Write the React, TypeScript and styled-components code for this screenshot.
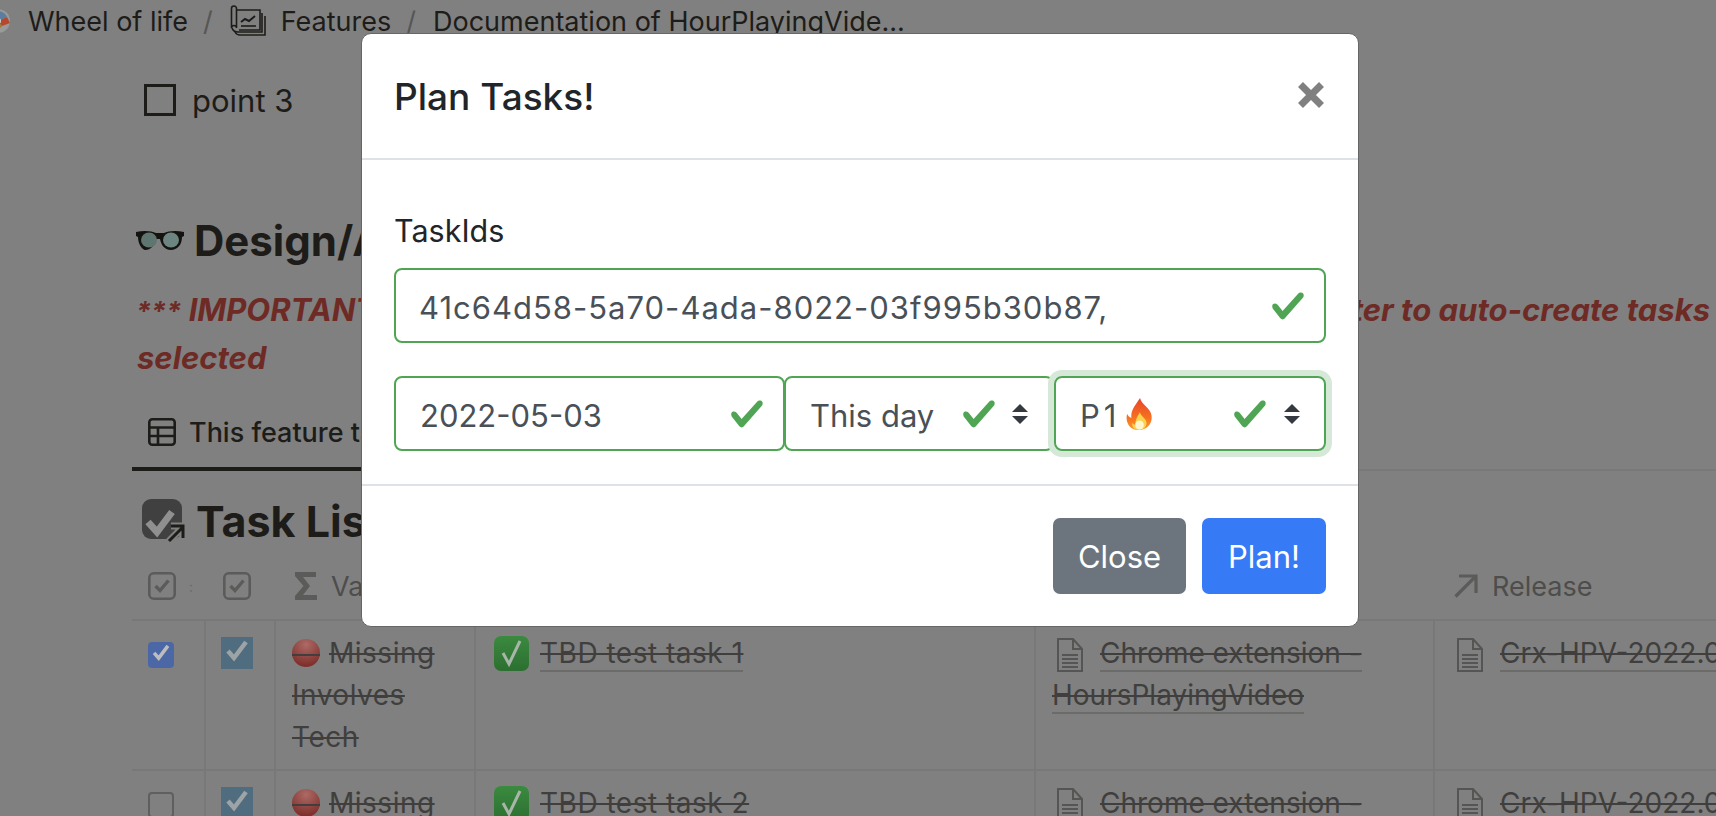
import React from 'react';
import styled, { createGlobalStyle } from 'styled-components';

const GlobalStyle = createGlobalStyle`
  html, body {
    margin: 0;
    padding: 0;
    height: 100%;
    overflow: hidden;
    background: #808080;
  }

  * {
    box-sizing: border-box;
  }
`;

const Page = styled.div`
  width: 1716px;
  height: 816px;
  overflow: hidden;
  background: #808080;
  color: #1d1c19;
  font-family: Inter, 'Liberation Sans', sans-serif;
`;

const Breadcrumbs = styled.nav`
  display: flex;
  align-items: center;
  height: 42px;
  margin-left: -14px;
  font-size: 27px;
  white-space: nowrap;
`;

const Crumb = styled.span<{ $gap: number }>`
  margin-left: ${(p) => p.$gap}px;
`;

const Slash = styled.span`
  margin: 0 17px 0 15px;
  color: #565654;
`;

const Content = styled.main`
  padding-left: 132px;
`;

const TodoRow = styled.div`
  display: flex;
  align-items: center;
  gap: 16px;
  height: 40px;
  margin-top: 38px;
  padding-left: 12px;
  font-size: 31px;
`;

const TodoBox = styled.span`
  width: 32px;
  height: 32px;
  border: 3px solid #1d1c19;
`;

const Heading = styled.h2`
  display: flex;
  align-items: center;
  gap: 10px;
  height: 60px;
  margin: 90px 0 0;
  padding-left: 4px;
  font-size: 42px;
  font-weight: 700;
  white-space: nowrap;
`;

const Note = styled.div<{ $flush?: boolean }>`
  display: flex;
  justify-content: space-between;
  margin-top: ${(p) => (p.$flush ? 0 : 16)}px;
  padding: 0 6px 0 5px;
  color: #6e2a25;
  font-size: 31px;
  font-style: italic;
  font-weight: 700;
  line-height: 48px;
  white-space: nowrap;
`;

const NoteStars = styled.span`
  margin-left: -1px;
  font-size: 27px;
  line-height: 1;
`;

const Tabs = styled.div`
  display: flex;
  margin-top: 28px;
  border-bottom: 2px solid #797979;
`;

const Tab = styled.div`
  display: flex;
  align-items: center;
  gap: 13px;
  width: 560px;
  height: 61px;
  margin-bottom: -2px;
  padding: 0 16px 13px;
  border-bottom: 4px solid #1d1c19;
  font-size: 27px;
  font-weight: 500;
  white-space: nowrap;
`;

const TaskHeading = styled(Heading)`
  margin: 21px 0 0;
  padding-left: 10px;
  gap: 10px;
  height: 58px;
  font-size: 43px;
`;

const COLUMNS = '74px 70px 200px 560px 399px 1fr';

const HeaderRow = styled.div`
  display: grid;
  grid-template-columns: ${COLUMNS};
  height: 71px;
  padding-top: 3px;
  border-bottom: 2px solid #787878;
  color: #4d4d4b;
  font-size: 27px;
`;

const HeaderCell = styled.div<{ $inset?: number }>`
  display: flex;
  align-items: center;
  gap: 14px;
  padding-left: ${(p) => p.$inset ?? 16}px;
  white-space: nowrap;
`;

const Grip = styled.span`
  margin-left: -1px;
  color: #6a6a6a;
  font-size: 14px;
`;

const Row = styled.div`
  display: grid;
  grid-template-columns: ${COLUMNS};
  height: 150px;
  border-bottom: 2px solid #787878;
`;

const Cell = styled.div<{ $inset?: number }>`
  padding: 11px 24px 0 ${(p) => p.$inset ?? 16}px;
  border-right: 2px solid #787878;
  color: #403f3d;
  font-size: 28px;
  line-height: 42px;

  &:last-child {
    padding-right: 0;
    border-right: 0;
    white-space: nowrap;
  }
`;

const Struck = styled.span`
  letter-spacing: 0.5px;
  text-decoration: line-through;
`;

const LinkText = styled.span<{ $spaced?: boolean }>`
  border-bottom: 2px solid #6b6b6a;
  letter-spacing: ${(p) => (p.$spaced ? '0.5px' : 'normal')};
  text-decoration: line-through;
`;

const InlineIcon = styled.svg<{ $gap?: number; $lead?: number; $drop?: number }>`
  display: inline-block;
  margin-right: ${(p) => p.$gap ?? 9}px;
  margin-left: ${(p) => p.$lead ?? 0}px;
  vertical-align: ${(p) => p.$drop ?? -4}px;
`;

const RowCheck = styled.span<{ $checked?: boolean }>`
  display: block;
  width: 26px;
  height: 26px;
  margin-top: 10px;
  border: ${(p) => (p.$checked ? '0' : '2px solid #5f5f5f')};
  border-radius: 4px;
  background: ${(p) => (p.$checked ? '#4c67a6' : 'transparent')};
`;

const PropCheck = styled.span`
  display: block;
  width: 32px;
  height: 32px;
  margin-top: 5px;
  background: #4f6d7f;
`;

const MarkSvg = styled.svg`
  display: block;
  margin: 3px;
  fill: none;
`;

const Overlay = styled.div`
  position: fixed;
  inset: 0;
  display: flex;
  justify-content: center;
  align-items: flex-start;
  padding: 33px 0 0 4px;
`;

const Modal = styled.section`
  width: 998px;
  height: 594px;
  border: 1.5px solid #666;
  border-radius: 10px;
  background: #fff;
  color: #212529;
  font-family: Inter, 'Liberation Sans', sans-serif;
`;

const ModalHeader = styled.header`
  display: flex;
  align-items: center;
  justify-content: space-between;
  height: 126px;
  padding: 0 32px;
  border-bottom: 2px solid #dee2e6;
`;

const ModalTitle = styled.h5`
  margin: 0;
  font-size: 37px;
  font-weight: 500;
`;

const CloseIcon = styled.svg`
  display: block;
  margin: 0 2px 2px 0;
  fill: none;
  stroke: #808080;
  stroke-width: 7;
`;

const ModalBody = styled.div`
  height: 324px;
  padding: 49px 32px 0;
`;

const FieldLabel = styled.div`
  margin-bottom: 15px;
  font-size: 30.5px;
  line-height: 44px;
`;

const Field = styled.div<{ $width?: number; $focused?: boolean; $spaced?: boolean }>`
  position: relative;
  display: flex;
  align-items: center;
  flex: ${(p) => (p.$width ? `0 0 ${p.$width}px` : '1 1 auto')};
  height: 75px;
  padding: 4px 0 0 ${(p) => (p.$width || p.$focused ? 24 : 23)}px;
  border: 2px solid #4fa553;
  border-radius: 8px;
  color: #495057;
  font-size: 31px;
  letter-spacing: ${(p) => (p.$spaced ? '1px' : 'normal')};
  box-shadow: ${(p) => (p.$focused ? '0 0 0 6px #d6e8d7' : 'none')};
  white-space: nowrap;
`;

const FieldRow = styled.div`
  display: flex;
  margin-top: 33px;
`;

const Tick = styled.svg<{ $right: number }>`
  position: absolute;
  top: 50%;
  right: ${(p) => p.$right}px;
  transform: translateY(-50%);
  fill: #4fa553;
`;

const Arrows = styled.svg`
  position: absolute;
  top: 50%;
  right: 24px;
  transform: translateY(-50%);
  fill: #343a40;
`;

const Priority = styled.span`
  letter-spacing: 4px;
`;

const Fire = styled.svg`
  margin: -4px 0 0 6px;
`;

const ModalFooter = styled.footer`
  display: flex;
  justify-content: flex-end;
  gap: 16px;
  padding: 32px 32px 0 0;
  border-top: 2px solid #dee2e6;
`;

const Button = styled.button<{ $primary?: boolean; $width: number }>`
  width: ${(p) => p.$width}px;
  height: 76px;
  padding: 0;
  border: 0;
  border-radius: 7px;
  background: ${(p) => (p.$primary ? '#367af6' : '#6c757d')};
  color: #fff;
  font-family: inherit;
  font-size: 31px;
`;

const Logo = () => (
  <svg width="24" height="24" viewBox="0 0 24 24">
    <circle cx="12" cy="12" r="12" fill="#9a9a9a" />
    <path d="M12 12 L12 2 A10 10 0 0 1 21 8 Z" fill="#5c7d9e" />
    <path d="M12 12 L21 8 L24 14 L16 17 Z" fill="#b5482e" />
    <path d="M12 12 L16 17 A10 10 0 0 1 9 21 Z" fill="#9a7d2c" />
    <circle cx="12" cy="12" r="3" fill="#d0d0d0" />
  </svg>
);

const FeaturesIcon = () => (
  <svg width="36" height="32" viewBox="0 0 36 32" fill="none" stroke="#1d1c19" strokeWidth="1.6">
    <path d="M6 5h24v20H9" />
    <path d="M1.500 3.500a2.500 2.500 0 0 1 5 0V23a2.500 2.500 0 0 0-5 0z" />
    <path d="M2 23c1 3 3 4 6 4h24V8" />
    <path d="M5 27c1 2 2 3 5 3h25V11" />
    <path d="M11 17l4-3 4 2 6-5" strokeWidth="2" />
    <path d="M11 21h15" />
  </svg>
);

const Glasses = () => (
  <svg width="48" height="22" viewBox="0 0 48 22">
    <path d="M0 3c8-2 16-1 20 1h8c4-2 12-3 20-1v4l-2 1c0 8-5 13-11 13-7 0-10-6-11-11h-4c-1 5-4 11-11 11C7 21 2 16 2 8L0 7z" fill="#14130f" />
    <ellipse cx="13" cy="11" rx="8" ry="7.500" fill="#5f7570" />
    <ellipse cx="35" cy="11" rx="8" ry="7.500" fill="#6d8580" />
  </svg>
);

const TableIcon = () => (
  <svg width="28" height="28" viewBox="0 0 28 28" fill="none" stroke="#1d1c19" strokeWidth="2.600">
    <rect x="1.300" y="1.300" width="25.400" height="25.400" rx="3" />
    <path d="M1.300 9.500h25.400M1.300 18h25.400M10 9.500v17" />
  </svg>
);

const TaskListIcon = () => (
  <svg width="44" height="44" viewBox="0 0 44 44" fill="none">
    <rect x="0" y="0" width="40" height="40" rx="9" fill="#404040" />
    <path d="M6 23l9 10L30 13" stroke="#8f8f8f" strokeWidth="7" />
    <path d="M27 42L41 28M29 27h12v12" stroke="#808080" strokeWidth="7" />
    <path d="M27 42L41 28M29 27h12v12" stroke="#1d1c19" strokeWidth="3" />
  </svg>
);

const CheckboxProp = () => (
  <svg width="28" height="28" viewBox="0 0 28 28" fill="none" stroke="#5b5b5a">
    <rect x="1.300" y="1.300" width="25.400" height="25.400" rx="4.500" strokeWidth="2.600" />
    <path d="M7.500 14l4.500 4.500 8.500-10" strokeWidth="3.400" />
  </svg>
);

const Sigma = () => (
  <svg width="22" height="28" viewBox="0 0 22 28" fill="#5b5b5a">
    <path d="M0 0h21v5H8l7 9-7 9h14v5H0v-4l8.500-10L0 4z" />
  </svg>
);

const RelationArrow = () => (
  <svg width="24" height="24" viewBox="0 0 24 24" fill="none" stroke="#5b5b5a" strokeWidth="3.200">
    <path d="M1.500 22.500L22 2M5 2h17v17" />
  </svg>
);

const Doc = ({ lead }: { lead: number }) => (
  <InlineIcon width="26" height="34" viewBox="0 0 26 34" $gap={17} $lead={lead} $drop={-9} fill="none" stroke="#555553" strokeWidth="2">
    <path d="M1 1h15l9 10v22H1z" />
    <path d="M16 1v10h9M5 17h16M5 21h16M5 25h16M5 29h16" />
  </InlineIcon>
);

const RedBall = () => (
  <InlineIcon width="28" height="28" viewBox="0 0 28 28">
    <defs>
      <radialGradient id="ball" cx="0.5" cy="0.2" r="0.75">
        <stop offset="0" stopColor="#ad6a66" />
        <stop offset="1" stopColor="#7f302c" />
      </radialGradient>
    </defs>
    <circle cx="14" cy="14" r="14" fill="url(#ball)" />
    <path d="M0 16h28" stroke="#403f3d" strokeWidth="2" />
  </InlineIcon>
);

const GreenCheck = () => (
  <InlineIcon width="35" height="35" viewBox="0 0 35 35" $gap={11} $drop={-8}>
    <defs>
      <linearGradient id="tile" x1="0" y1="0" x2="0" y2="1">
        <stop offset="0" stopColor="#3b8a3f" />
        <stop offset="1" stopColor="#2c6f31" />
      </linearGradient>
    </defs>
    <rect width="35" height="35" rx="7" fill="url(#tile)" />
    <path d="M9 17l6 11L26 5" fill="none" stroke="#a9b5a9" strokeWidth="3" />
  </InlineIcon>
);

const CheckMark = ({ color, size }: { color: string; size: number }) => (
  <MarkSvg width={size} height={size} viewBox="0 0 26 26" stroke={color} strokeWidth="4.500">
    <path d="M4 14l6 7L22 5" />
  </MarkSvg>
);

const Valid = ({ right }: { right: number }) => (
  <Tick $right={right} width="36" height="36" viewBox="0 0 8 8">
    <path d="M2.300 6.730L.600 4.530c-.400-1.040.460-1.400 1.100-.800l1.100 1.400 3.400-3.800c.600-.630 1.600-.270 1.200.700l-4 4.600c-.430.500-.800.400-1.100.100z" />
  </Tick>
);

const SelectArrows = () => (
  <Arrows width="16" height="20" viewBox="0 0 4 5">
    <path d="M2 0L0 2h4zm0 5L0 3h4z" />
  </Arrows>
);

const FireIcon = () => (
  <Fire width="27" height="32" viewBox="0 0 25 32" preserveAspectRatio="none">
    <defs>
      <linearGradient id="flame" x1="0" y1="0" x2="0" y2="1">
        <stop offset="0" stopColor="#e8432a" />
        <stop offset="0.6" stopColor="#f6701f" />
        <stop offset="1" stopColor="#fb9a2a" />
      </linearGradient>
    </defs>
    <path d="M13 0c1 6 8 9 10 15 3 9-3 17-11 17S-1 25 1 16c1 2 2 3 4 4C4 12 9 7 13 0z" fill="url(#flame)" />
    <path d="M13 14c0 4 6 6 6 11 0 4-3 7-7 7s-7-3-6-7c1 1 2 2 3 2-1-5 2-9 4-13z" fill="#fcd34d" />
    <ellipse cx="12.500" cy="27" rx="4" ry="4.500" fill="#fff6d0" />
  </Fire>
);

const TaskRow = ({ checked, name }: { checked?: boolean; name: string }) => (
  <Row>
    <Cell>
      <RowCheck $checked={checked}>{checked && <CheckMark color="#bdbdbd" size={20} />}</RowCheck>
    </Cell>
    <Cell $inset={15}>
      <PropCheck>
        <CheckMark color="#9ea3a6" size={26} />
      </PropCheck>
    </Cell>
    <Cell $inset={16}>
      <Struck>
        <RedBall />
        Missing Involves Tech
      </Struck>
    </Cell>
    <Cell $inset={18}>
      <GreenCheck />
      <LinkText $spaced>{name}</LinkText>
    </Cell>
    <Cell>
      <Doc lead={5} />
      <LinkText>Chrome extension - HoursPlayingVideo</LinkText>
    </Cell>
    <Cell>
      <Doc lead={6} />
      <LinkText>Crx-HPV-2022.05.03</LinkText>
    </Cell>
  </Row>
);

const App: React.FC = () => {
  return (
    <>
      <GlobalStyle />
      <Page>
        <Breadcrumbs>
          <Logo />
          <Crumb $gap={18}>Wheel of life</Crumb>
          <Slash>/</Slash>
          <FeaturesIcon />
          <Crumb $gap={15}>Features</Crumb>
          <Slash>/</Slash>
          <span>Documentation of HourPlayingVide...</span>
        </Breadcrumbs>

        <Content>
          <TodoRow>
            <TodoBox />
            point 3
          </TodoRow>

          <Heading>
            <Glasses />
            Design/Architecture
          </Heading>

          <Note>
            <span>
              <NoteStars>***</NoteStars> IMPORTANT
            </span>
            <span>filter to auto-create tasks</span>
          </Note>
          <Note $flush>selected</Note>

          <Tabs>
            <Tab>
              <TableIcon />
              This feature tasks
            </Tab>
          </Tabs>

          <TaskHeading>
            <TaskListIcon />
            Task List
          </TaskHeading>

          <HeaderRow>
            <HeaderCell>
              <CheckboxProp />
              <Grip>:</Grip>
            </HeaderCell>
            <HeaderCell $inset={17}>
              <CheckboxProp />
            </HeaderCell>
            <HeaderCell $inset={19}>
              <Sigma />
              Value
            </HeaderCell>
            <HeaderCell>Task</HeaderCell>
            <HeaderCell>Feature</HeaderCell>
            <HeaderCell $inset={19}>
              <RelationArrow />
              Release
            </HeaderCell>
          </HeaderRow>

          <TaskRow checked name="TBD test task 1" />
          <TaskRow name="TBD test task 2" />
        </Content>
      </Page>

      <Overlay>
        <Modal>
          <ModalHeader>
            <ModalTitle>Plan Tasks!</ModalTitle>
            <CloseIcon width="26" height="26" viewBox="0 0 26 26">
              <path d="M2.500 2.500l21 21M23.500 2.500l-21 21" />
            </CloseIcon>
          </ModalHeader>

          <ModalBody>
            <FieldLabel>TaskIds</FieldLabel>
            <Field $spaced>
              41c64d58-5a70-4ada-8022-03f995b30b87,
              <Valid right={18} />
            </Field>
            <FieldRow>
              <Field $width={391}>
                2022-05-03
                <Valid right={18} />
              </Field>
              <Field $width={270} style={{ marginLeft: -1 }}>
                This day
                <Valid right={55} />
                <SelectArrows />
              </Field>
              <Field $focused>
                <Priority>P1</Priority>
                <FireIcon />
                <Valid right={56} />
                <SelectArrows />
              </Field>
            </FieldRow>
          </ModalBody>

          <ModalFooter>
            <Button $width={133}>Close</Button>
            <Button $primary $width={124}>
              Plan!
            </Button>
          </ModalFooter>
        </Modal>
      </Overlay>
    </>
  );
};

export default App;
